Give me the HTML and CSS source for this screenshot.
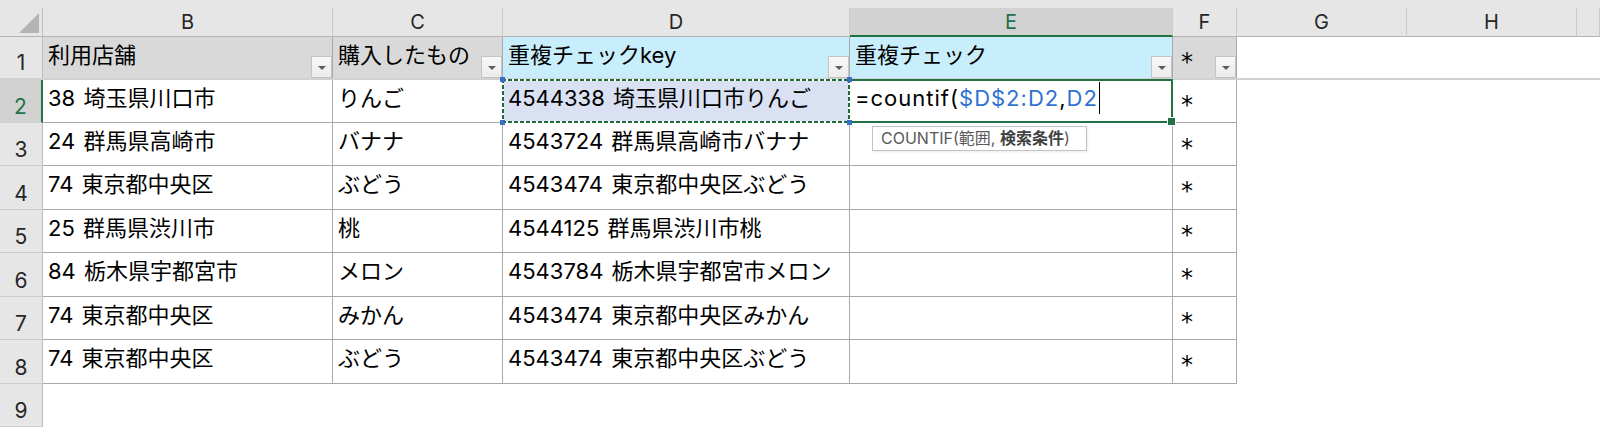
FILE: index.html
```html
<!DOCTYPE html>
<html lang="ja">
<head>
    <meta charset="UTF-8">
    <title>重複チェック</title>
    <link rel="stylesheet" href="styles.css">
</head>
<body>
    <div class="strip"></div>

    <div class="grid-row col-heads">
        <div class="corner"><span class="corner-tri"></span></div>
        <div class="ch">B</div>
        <div class="ch">C</div>
        <div class="ch">D</div>
        <div class="ch sel">E</div>
        <div class="ch">F</div>
        <div class="ch">G</div>
        <div class="ch">H</div>
        <div class="ch"></div>
    </div>

    <div class="grid-row row row-head">
        <div class="rh">1</div>
        <div class="c hc gray">利用店舗<span class="filter"><i></i></span></div>
        <div class="c hc gray">購入したもの<span class="filter"><i></i></span></div>
        <div class="c hc blue">重複チェックkey<span class="filter"><i></i></span></div>
        <div class="c hc blue">重複チェック<span class="filter"><i></i></span></div>
        <div class="c hc gray star">*<span class="filter"><i></i></span></div>
        <div class="e"></div><div class="e"></div><div class="e"></div>
    </div>

    <div class="grid-row row">
        <div class="rh sel">2</div>
        <div class="c">38 埼玉県川口市</div>
        <div class="c">りんご</div>
        <div class="c ref">4544338 埼玉県川口市りんご
            <span class="hd tl"></span><span class="hd tr"></span><span class="hd bl"></span><span class="hd br"></span>
        </div>
        <div class="c active">=countif(<span class="rt">$D$2:D2</span>,<span class="rt">D2</span><span class="caret"></span>
            <div class="tip">COUNTIF(範囲, <b>検索条件</b>)</div>
        </div>
        <div class="c star">*</div>
        <div class="e"></div><div class="e"></div><div class="e"></div>
    </div>

    <div class="grid-row row">
        <div class="rh">3</div>
        <div class="c">24 群馬県高崎市</div>
        <div class="c">バナナ</div>
        <div class="c">4543724 群馬県高崎市バナナ</div>
        <div class="c"></div>
        <div class="c star">*</div>
        <div class="e"></div><div class="e"></div><div class="e"></div>
    </div>

    <div class="grid-row row tall">
        <div class="rh">4</div>
        <div class="c">74 東京都中央区</div>
        <div class="c">ぶどう</div>
        <div class="c">4543474 東京都中央区ぶどう</div>
        <div class="c"></div>
        <div class="c star">*</div>
        <div class="e"></div><div class="e"></div><div class="e"></div>
    </div>

    <div class="grid-row row">
        <div class="rh">5</div>
        <div class="c">25 群馬県渋川市</div>
        <div class="c">桃</div>
        <div class="c">4544125 群馬県渋川市桃</div>
        <div class="c"></div>
        <div class="c star">*</div>
        <div class="e"></div><div class="e"></div><div class="e"></div>
    </div>

    <div class="grid-row row tall">
        <div class="rh">6</div>
        <div class="c">84 栃木県宇都宮市</div>
        <div class="c">メロン</div>
        <div class="c">4543784 栃木県宇都宮市メロン</div>
        <div class="c"></div>
        <div class="c star">*</div>
        <div class="e"></div><div class="e"></div><div class="e"></div>
    </div>

    <div class="grid-row row">
        <div class="rh">7</div>
        <div class="c">74 東京都中央区</div>
        <div class="c">みかん</div>
        <div class="c">4543474 東京都中央区みかん</div>
        <div class="c"></div>
        <div class="c star">*</div>
        <div class="e"></div><div class="e"></div><div class="e"></div>
    </div>

    <div class="grid-row row tall">
        <div class="rh">8</div>
        <div class="c">74 東京都中央区</div>
        <div class="c">ぶどう</div>
        <div class="c">4543474 東京都中央区ぶどう</div>
        <div class="c"></div>
        <div class="c star">*</div>
        <div class="e"></div><div class="e"></div><div class="e"></div>
    </div>

    <div class="grid-row row">
        <div class="rh">9</div>
    </div>
</body>
</html>
```

FILE: styles.css
```css
* {
    margin: 0;
    padding: 0;
    box-sizing: border-box;
}

body {
    width: 1600px;
    height: 435px;
    overflow: hidden;
    background: #fff;
    font-family: Inter, "Noto Sans CJK JP", sans-serif;
    color: #000;
}

.strip {
    height: 8px;
    background: #e6e6e6;
}

.grid-row {
    display: grid;
    grid-template-columns: 43px 290px 170px 347px 323px 64px 170px 170px 1fr;
    grid-template-rows: minmax(0, 1fr);
}

/* column headers */
.col-heads {
    height: 29px;
    background: #e6e6e6;
}

.corner {
    display: flex;
    justify-content: flex-end;
    align-items: flex-end;
    padding: 0 3px 3px 0;
    border-right: 1px solid #bdbdbd;
    border-bottom: 1px solid #b4b4b4;
}

.corner-tri {
    width: 0;
    height: 0;
    border-left: 20px solid transparent;
    border-bottom: 20px solid #b4b4b4;
}

.ch {
    text-align: center;
    font-size: 20px;
    line-height: 28px;
    color: #262626;
    border-right: 1px solid #cbcbcb;
    border-bottom: 1px solid #b4b4b4;
}

.ch.sel {
    background: #d2d2d2;
    color: #217346;
    border-bottom: 2px solid #217346;
}

/* rows */
.row {
    height: 43px;
}

.row.tall {
    height: 44px;
}

.row-head {
    border-bottom: 2px solid #d0d0d0;
}

.rh {
    display: flex;
    align-items: flex-end;
    justify-content: center;
    padding-bottom: 5px;
    font-size: 21px;
    line-height: 21px;
    color: #262626;
    background: #e6e6e6;
    border-right: 1px solid #bdbdbd;
    border-bottom: 1px solid #cdcdcd;
}

.row-head .rh {
    border-bottom: none;
}

.rh.sel {
    background: #d2d2d2;
    color: #217346;
    border-right: 2px solid #217346;
}

.c {
    font-size: 22px;
    line-height: 36px;
    padding-left: 5px;
    white-space: nowrap;
    word-spacing: 2px;
    border-right: 1px solid #a9a9a9;
    border-bottom: 1px solid #a9a9a9;
}

.row-head .c {
    border-bottom: none;
}

.c.star {
    padding-left: 8px;
    padding-top: 11px;
    font-family: "DejaVu Sans", sans-serif;
    font-size: 24px;
    line-height: 28px;
}

/* header cells with filter buttons */
.hc {
    display: flex;
    justify-content: space-between;
    align-items: flex-start;
}

.hc.star {
    padding-top: 11px;
}

.hc.gray {
    background: #d9d9d9;
}

.hc.blue {
    background: #c8eefb;
}

.filter {
    align-self: flex-end;
    display: flex;
    justify-content: center;
    align-items: center;
    width: 21px;
    height: 22px;
    margin-bottom: 0;
    background: linear-gradient(#f8f8f8, #ececec);
    border: 1px solid #c4c4c4;
}

.filter i {
    width: 0;
    height: 0;
    margin-top: 2px;
    border-left: 4px solid transparent;
    border-right: 4px solid transparent;
    border-top: 4px solid #5f5f5f;
}

/* referenced range */
.ref {
    position: relative;
    z-index: 2;
    background: #d9e1f2;
}

.ref::after {
    content: "";
    position: absolute;
    top: -1px;
    left: -1px;
    right: -1px;
    bottom: -1px;
    background:
        repeating-linear-gradient(90deg, #1d6b37 0 4px, #fff 4px 6px) top / 100% 2px no-repeat,
        repeating-linear-gradient(90deg, #1d6b37 0 4px, #fff 4px 6px) bottom / 100% 2px no-repeat,
        repeating-linear-gradient(180deg, #1d6b37 0 4px, #fff 4px 6px) left / 2px 100% no-repeat,
        repeating-linear-gradient(180deg, #1d6b37 0 4px, #fff 4px 6px) right / 2px 100% no-repeat;
}

.hd {
    position: absolute;
    z-index: 3;
    width: 5px;
    height: 5px;
    background: #3a6fc6;
}

.hd.tl { top: -3px; left: -3px; }
.hd.tr { top: -3px; right: -3px; }
.hd.bl { bottom: -3px; left: -3px; }
.hd.br { bottom: -3px; right: -3px; }

/* active cell */
.active {
    position: relative;
    z-index: 1;
    word-spacing: 0;
    letter-spacing: 1px;
}

.active::after {
    content: "";
    position: absolute;
    top: -1px;
    left: -2px;
    right: -1px;
    bottom: -1px;
    border: 2px solid #217346;
}

.active::before {
    content: "";
    position: absolute;
    z-index: 2;
    right: -4px;
    bottom: -4px;
    width: 7px;
    height: 7px;
    background: #217346;
    border: 1px solid #fff;
}

.rt {
    color: #2f72d2;
}

.caret {
    display: inline-block;
    width: 1px;
    height: 32px;
    margin-left: 1px;
    vertical-align: -8px;
    background: #000;
}

.tip {
    position: absolute;
    z-index: 4;
    left: 22px;
    top: 46px;
    width: 215px;
    height: 25px;
    padding-left: 8px;
    font-size: 16px;
    line-height: 23px;
    letter-spacing: 0;
    color: #595959;
    background: #fff;
    border: 1px solid #c3c3c3;
    box-shadow: 1px 1px 2px rgba(0, 0, 0, 0.08);
}

.tip b {
    color: #404040;
}
```
